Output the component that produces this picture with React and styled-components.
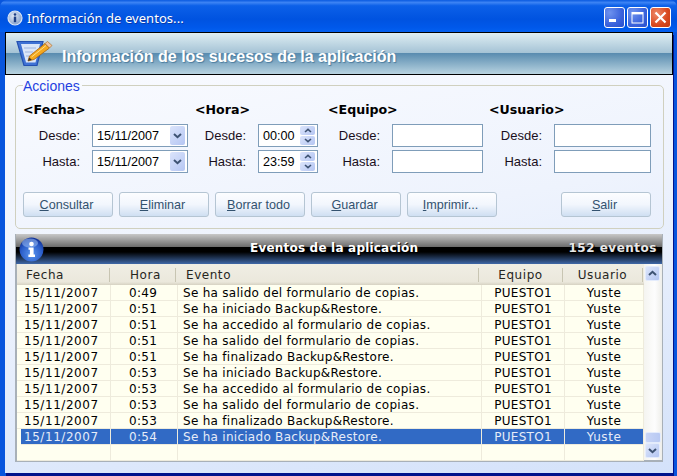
import React from "react";
import styled, { createGlobalStyle } from "styled-components";

const Global = createGlobalStyle`
  html, body { margin: 0; padding: 0; background: #0855dd; }
  * { box-sizing: border-box; }
`;

const Win = styled.div`
  width: 677px;
  height: 476px;
  display: flex;
  flex-direction: column;
  overflow: hidden;
  border-radius: 7px 7px 0 0;
  background: #0855dd;
  font-family: "Liberation Sans", Arial, sans-serif;
`;

const TitleBar = styled.div`
  height: 32px;
  flex: none;
  display: flex;
  align-items: center;
  padding: 3px 6px 0 7px;
  gap: 5px;
  background: linear-gradient(180deg, #0a5ae0 0%, #3c83f4 8%, #0c60e8 18%, #0053e0 60%, #0058ea 85%, #0360f0 100%);
`;

const TitleText = styled.div`
  flex: 1;
  color: #fff;
  font-family: "Noto Sans", sans-serif;
  font-size: 13px;
  margin-left: -1px;
  letter-spacing: 0.05px;
  text-shadow: 1px 1px 0 #0b3aa8;
`;

const Controls = styled.div`
  display: flex;
  gap: 2px;
`;

const CtlBtn = styled.div`
  width: 21px;
  height: 21px;
  border: 1px solid #fff;
  border-radius: 3px;
  background: ${(p) =>
    p.$close
      ? "radial-gradient(circle at 30% 30%, #ee8a6a, #d8481f 60%, #c23a12)"
      : "radial-gradient(circle at 25% 25%, #6e92ee, #3a62dc 60%, #2a50cc)"};
  display: flex;
  align-items: center;
  justify-content: center;
`;

const Client = styled.div`
  flex: 1;
  margin: 0 4px 3px 5px;
  background: linear-gradient(170deg, #fbfcff 0%, #eef3fd 45%, #d4e2fa 100%);
  display: flex;
  flex-direction: column;
  min-height: 0;
  box-shadow: 1px 3px 0 #00138c;
`;

const Band = styled.div`
  height: 43px;
  flex: none;
  border: 1px solid #000;
  display: flex;
  align-items: center;
  padding-left: 10px;
  gap: 9px;
  background: linear-gradient(180deg, #deeef3 0%, #a4c2d5 49%, #5a8cb0 50%, #b8d3e0 100%);
`;

const BandTitle = styled.div`
  color: #fff;
  font-size: 16px;
  font-weight: 700;
  letter-spacing: 0;
  text-shadow: 1px 1px 1px #4b7c9e;
  padding-top: 6px;
`;

const Content = styled.div`
  flex: 1;
  display: flex;
  flex-direction: column;
  padding: 2px 9px 0 10px;
  min-height: 0;
`;

const Group = styled.fieldset`
  margin: 0;
  padding: 7px 7px 0 7px;
  height: 152px;
  flex: none;
  min-width: 0;
  border: 1px solid #d0d0bf;
  border-radius: 5px;
`;

const Legend = styled.legend`
  padding: 2px 2px 0 0;
  color: #1f3fe0;
  font-size: 14px;
  line-height: 15px;
`;

const Fields = styled.div`
  display: grid;
  grid-template-columns: 172px 133px 161px 162px;
`;

const FieldSet = styled.div`
  display: flex;
  flex-direction: column;
`;

const Heading = styled.div`
  height: 20px;
  line-height: 18px;
  margin-bottom: 3px;
  font-family: "DejaVu Sans", sans-serif;
  font-weight: 700;
  font-size: 12.6px;
  color: #000;
`;

const FieldRow = styled.div`
  display: flex;
  align-items: center;
  height: 23px;
  margin-bottom: 3px;
`;

const Label = styled.div`
  width: ${(p) => p.$w}px;
  padding-right: 12px;
  text-align: right;
  font-size: 13px;
  color: #1a0f20;
`;

const Input = styled.div`
  width: ${(p) => p.$w}px;
  height: 23px;
  border: 1px solid #7f9db9;
  background: #fff;
  display: flex;
  align-items: center;
  justify-content: space-between;
  padding: 0 2px 0 4px;
  font-size: 12.6px;
  color: #000;
`;

const Drop = styled.div`
  width: 15px;
  height: 19px;
  border-radius: 2px;
  background: linear-gradient(135deg, #dbe4fb, #b5c6f3);
  display: flex;
  align-items: center;
  justify-content: center;
`;

const Spin = styled.div`
  width: 15px;
  height: 19px;
  display: flex;
  flex-direction: column;
  gap: 1px;
`;

const SpinPart = styled(Drop)`
  height: 9px;
`;

const Buttons = styled.div`
  display: flex;
  gap: 6px;
  margin-top: 16px;
`;

const Btn = styled.div`
  width: 90px;
  height: 25px;
  margin-left: ${(p) => p.$push || 0}px;
  padding-right: 3px;
  border: 1px solid #b5c5d3;
  border-radius: 3px;
  background: linear-gradient(180deg, #fcfdff 0%, #f2f6fd 50%, #cfdff2 100%);
  display: flex;
  align-items: center;
  justify-content: center;
  font-size: 12.6px;
  color: #33526f;
`;

const Panel = styled.div`
  margin-top: 5px;
  height: 228px;
  flex: none;
  width: 648px;
  border: 2px solid #a8b0b8;
  border-top: none;
  display: flex;
  flex-direction: column;
`;

const InfoBar = styled.div`
  height: 30px;
  flex: none;
  margin: 0 -1px 0 -1px;
  display: flex;
  align-items: center;
  padding: 0 5px 0 3px;
  font-family: "DejaVu Sans", sans-serif;
  background: linear-gradient(180deg, #c8c8c8 0%, #6e6e6e 42%, #000 44%, #000 60%, #3f68a8 100%);
`;

const InfoTitle = styled.div`
  flex: 1;
  margin-left: 4px;
  padding-left: 202px;
  font-size: 12px;
  font-weight: 700;
  letter-spacing: 0.2px;
  color: #fff;
  text-shadow: 1px 1px 1px #000;
  padding-bottom: 2px;
`;

const InfoCount = styled(InfoTitle)`
  flex: none;
  padding-left: 0;
  margin-left: 0;
  letter-spacing: 0.5px;
  color: #e8e8e8;
`;

const Lower = styled.div`
  flex: 1;
  display: flex;
  min-height: 0;
`;

const Grid = styled.div`
  flex: 1;
  display: flex;
  flex-direction: column;
  background: #fffff0;
  font-family: "DejaVu Sans", sans-serif;
  font-size: 12px;
  letter-spacing: 0.55px;
`;

const HeadRow = styled.div`
  height: 21px;
  flex: none;
  display: grid;
  grid-template-columns: 93px 66px 303px 84px 80px;
  background: linear-gradient(180deg, #f0eee4 0%, #ebe8dc 85%, #d6d2c2 100%);
  align-items: center;
  color: #26261e;
`;

const HeadCell = styled.div`
  height: 14px;
  line-height: 14px;
  padding-left: ${(p) => p.$pl || 0}px;
  text-align: ${(p) => (p.$center ? "center" : "left")};
  border-right: 1px solid #c8c5b2;
`;

const Row = styled.div`
  height: 16px;
  flex: none;
  display: grid;
  grid-template-columns: ${(p) => (p.$selected ? "90px" : "94px")} 67px 304px 83px 79px;
  background: ${(p) => (p.$selected ? "#316ac5" : "transparent")};
  margin-left: ${(p) => (p.$selected ? 4 : 0)}px;
  color: ${(p) => (p.$selected ? "#e6ecf8" : "#000")};
  border-bottom: 1px solid #eeebdc;
`;

const Cell = styled.div`
  line-height: 17px;
  padding-left: ${(p) => p.$pl || 0}px;
  text-align: ${(p) => (p.$center ? "center" : "left")};
  letter-spacing: ${(p) => (p.$tight ? "0.28px" : "inherit")};
  border-right: 1px solid #eeebdc;
  white-space: nowrap;
  overflow: hidden;
`;

const Scrollbar = styled.div`
  width: 18px;
  flex: none;
  padding: 2px 1px;
  display: flex;
  flex-direction: column;
  background: linear-gradient(90deg, #f4f4f0, #fdfdfd 60%, #eeeeea);
`;

const ScrollBtn = styled.div`
  width: 15px;
  height: 15px;
  border: 1px solid #e4ecfc;
  border-radius: 2px;
  background: linear-gradient(135deg, #dde6fb, #b4c6f2);
  display: flex;
  align-items: center;
  justify-content: center;
`;

const Track = styled.div`
  flex: 1;
  display: flex;
  flex-direction: column;
  justify-content: flex-end;
`;

const Thumb = styled.div`
  height: 11px;
  border: 1px solid #e4ecfc;
  border-radius: 2px;
  background: linear-gradient(90deg, #c8d5f6, #b8c9f3);
`;

const Chevron = ({ up }) => (
  <svg width="9" height="7" viewBox="0 0 9 7">
    <path
      d={up ? "M1 5L4.5 1.8L8 5" : "M1 2L4.5 5.2L8 2"}
      fill="none"
      stroke="#3d5272"
      strokeWidth="2"
    />
  </svg>
);

const SmallChevron = ({ up }) => (
  <svg width="8" height="5" viewBox="0 0 8 5">
    <path
      d={up ? "M1 4L4 1.4L7 4" : "M1 1L4 3.6L7 1"}
      fill="none"
      stroke="#3d5272"
      strokeWidth="1.6"
    />
  </svg>
);

const SmallInfo = () => (
  <svg width="16" height="16" viewBox="0 0 16 16">
    <defs>
      <radialGradient id="si" cx="40%" cy="35%" r="70%">
        <stop offset="0" stopColor="#dfe8f6" />
        <stop offset="1" stopColor="#7f9cc8" />
      </radialGradient>
    </defs>
    <circle cx="8" cy="8" r="7" fill="url(#si)" stroke="#d8e4f6" strokeWidth="1.2" />
    <circle cx="8" cy="4.5" r="1.3" fill="#1d3f86" />
    <rect x="6.8" y="6.6" width="2.4" height="5.6" fill="#1d3f86" />
  </svg>
);

const BigInfo = () => (
  <svg width="25" height="25" viewBox="0 0 25 25">
    <defs>
      <radialGradient id="bi" cx="50%" cy="70%" r="65%">
        <stop offset="0" stopColor="#5a96f0" />
        <stop offset="0.7" stopColor="#2a5cc8" />
        <stop offset="1" stopColor="#13349a" />
      </radialGradient>
    </defs>
    <circle cx="12.5" cy="12.5" r="12" fill="url(#bi)" />
    <ellipse cx="11" cy="6" rx="8" ry="4.5" fill="#9cc0f4" opacity="0.55" />
    <circle cx="12.5" cy="7" r="2.3" fill="#fff" />
    <path d="M9.5 10.5H14.6V17.6H16V20H9.4V17.6H10.9V12.8H9.5Z" fill="#fff" />
  </svg>
);

const Notepad = () => (
  <svg width="37" height="28" viewBox="0 0 37 28">
    <path d="M1 1.5H27L21 25.5H8Z" fill="#3f72d4" stroke="#2450b0" strokeWidth="1.2" />
    <path d="M5 4H24L19.5 22.5H10Z" fill="#dbe6f8" />
    <path d="M8 8H20M9 12H17M10 16H14" stroke="#9db4e0" strokeWidth="1.2" />
    <path d="M12 21L13.5 16L29 3.5L33.5 8L18 19.5Z" fill="#f4a81e" stroke="#a8620e" strokeWidth="0.8" />
    <path d="M29 3.5L31.5 1.5L36 5.5L33.5 8Z" fill="#f0c4a0" stroke="#a8620e" strokeWidth="0.6" />
    <path d="M12 21L13.2 17.5L15.8 19.8Z" fill="#40352a" />
    <path d="M15.5 17L30 5.5" stroke="#ffe08a" strokeWidth="1" />
  </svg>
);

const Header = () => (
  <HeadRow>
    <HeadCell $pl={9}>Fecha</HeadCell>
    <HeadCell $pl={20}>Hora</HeadCell>
    <HeadCell $pl={10}>Evento</HeadCell>
    <HeadCell $center>Equipo</HeadCell>
    <HeadCell $center>Usuario</HeadCell>
  </HeadRow>
);

const events = [
  ["0:49", "Se ha salido del formulario de copias."],
  ["0:51", "Se ha iniciado Backup&Restore."],
  ["0:51", "Se ha accedido al formulario de copias."],
  ["0:51", "Se ha salido del formulario de copias."],
  ["0:51", "Se ha finalizado Backup&Restore."],
  ["0:53", "Se ha iniciado Backup&Restore."],
  ["0:53", "Se ha accedido al formulario de copias."],
  ["0:53", "Se ha salido del formulario de copias."],
  ["0:53", "Se ha finalizado Backup&Restore."],
  ["0:54", "Se ha iniciado Backup&Restore."],
];

const fieldGroups = [
  { title: "<Fecha>", label: 69, input: 96, values: ["15/11/2007", "15/11/2007"], kind: "date" },
  { title: "<Hora>", label: 63, input: 60, values: ["00:00", "23:59"], kind: "time" },
  { title: "<Equipo>", label: 64, input: 91, values: ["", ""] },
  { title: "<Usuario>", label: 65, input: 97, values: ["", ""] },
];

const Field = ({ group, label, value }) => (
  <FieldRow>
    <Label $w={group.label}>{label}</Label>
    <Input $w={group.input}>
      <span>{value}</span>
      {group.kind === "date" && (
        <Drop>
          <Chevron />
        </Drop>
      )}
      {group.kind === "time" && (
        <Spin>
          <SpinPart>
            <SmallChevron up />
          </SpinPart>
          <SpinPart>
            <SmallChevron />
          </SpinPart>
        </Spin>
      )}
    </Input>
  </FieldRow>
);

export default function App() {
  return (
    <Win>
      <Global />
      <TitleBar>
        <SmallInfo />
        <TitleText>Información de eventos...</TitleText>
        <Controls>
          <CtlBtn>
            <svg width="13" height="13" viewBox="0 0 13 13"><rect x="1" y="8" width="7" height="3" fill="#fff" /></svg>
          </CtlBtn>
          <CtlBtn>
            <svg width="13" height="13" viewBox="0 0 13 13">
              <rect x="1" y="1.5" width="11" height="10.5" fill="none" stroke="#fff" />
              <rect x="1" y="1" width="11" height="2.4" fill="#fff" />
            </svg>
          </CtlBtn>
          <CtlBtn $close>
            <svg width="13" height="13" viewBox="0 0 13 13">
              <path d="M1.5 1.5L11.5 11.5M11.5 1.5L1.5 11.5" stroke="#fff" strokeWidth="2.2" />
            </svg>
          </CtlBtn>
        </Controls>
      </TitleBar>
      <Client>
        <Band>
          <Notepad />
          <BandTitle>Información de los sucesos de la aplicación</BandTitle>
        </Band>
        <Content>
          <Group>
            <Legend>Acciones</Legend>
            <Fields>
              {fieldGroups.map((g) => (
                <FieldSet key={g.title}>
                  <Heading>{g.title}</Heading>
                  <Field group={g} label="Desde:" value={g.values[0]} />
                  <Field group={g} label="Hasta:" value={g.values[1]} />
                </FieldSet>
              ))}
            </Fields>
            <Buttons>
              <Btn><span><u>C</u>onsultar</span></Btn>
              <Btn><span><u>E</u>liminar</span></Btn>
              <Btn><span><u>B</u>orrar todo</span></Btn>
              <Btn><span><u>G</u>uardar</span></Btn>
              <Btn><span><u>I</u>mprimir...</span></Btn>
              <Btn $push={58}><span><u>S</u>alir</span></Btn>
            </Buttons>
          </Group>
          <Panel>
            <InfoBar>
              <BigInfo />
              <InfoTitle>Eventos de la aplicación</InfoTitle>
              <InfoCount>152 eventos</InfoCount>
            </InfoBar>
            <Lower>
              <Grid>
                <Header />
                {events.map(([hour, text], i) => {
                  const selected = i === events.length - 1;
                  return (
                    <Row key={i} $selected={selected}>
                      <Cell $pl={selected ? 3 : 7}>15/11/2007</Cell>
                      <Cell $pl={18} $tight>{hour}</Cell>
                      <Cell $pl={5} $tight>{text}</Cell>
                      <Cell $center $tight>PUESTO1</Cell>
                      <Cell $center>Yuste</Cell>
                    </Row>
                  );
                })}
                <Row>
                  <Cell />
                  <Cell />
                  <Cell />
                  <Cell />
                  <Cell />
                </Row>
              </Grid>
              <Scrollbar>
                <ScrollBtn><Chevron up /></ScrollBtn>
                <Track><Thumb /></Track>
                <ScrollBtn><Chevron /></ScrollBtn>
              </Scrollbar>
            </Lower>
          </Panel>
        </Content>
      </Client>
    </Win>
  );
}
